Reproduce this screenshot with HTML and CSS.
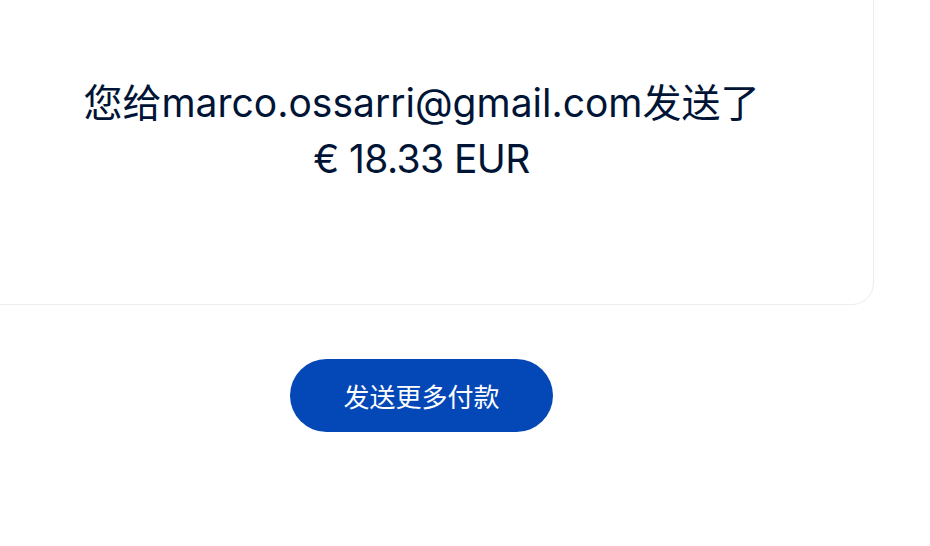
FILE: index.html
```html
<!DOCTYPE html>
<html lang="zh">
<head>
<meta charset="utf-8">
<link rel="stylesheet" href="styles.css">
</head>
<body>
<main class="page">
  <section class="card">
    <p class="message">您给marco.ossarri@gmail.com发送了 <span class="amount">€&nbsp;18.33&nbsp;EUR</span></p>
  </section>
  <div class="actions">
    <button class="btn-primary" type="button">发送更多付款</button>
  </div>
</main>
</body>
</html>
```
FILE: styles.css
```css
html, body {
  margin: 0;
  padding: 0;
  background: #ffffff;
}
body {
  font-family: Inter, "Noto Sans CJK SC", sans-serif;
  color: #001435;
  width: 930px;
  height: 546px;
  overflow: hidden;
}
.page {
  width: 905px;
  margin-left: -31px;
  margin-top: -30px;
  display: flex;
  flex-direction: column;
  align-items: center;
}
.card {
  box-sizing: border-box;
  width: 100%;
  height: 335px;
  border: 1px solid #ececec;
  border-radius: 22px;
  display: flex;
  justify-content: center;
  padding-top: 104px;
}
.message {
  margin: 0;
  width: 720px;
  text-align: center;
  font-size: 39px;
  line-height: 56px;
  font-weight: 400;
}
.amount {
  white-space: nowrap;
  letter-spacing: -0.6px;
}
.actions {
  margin-top: 54px;
  display: flex;
  justify-content: center;
}
.btn-primary {
  width: 263px;
  height: 73px;
  border: none;
  border-radius: 37px;
  background: #0447b7;
  color: #ffffff;
  font-family: Inter, "Noto Sans CJK SC", sans-serif;
  font-size: 26px;
  cursor: pointer;
}
```
